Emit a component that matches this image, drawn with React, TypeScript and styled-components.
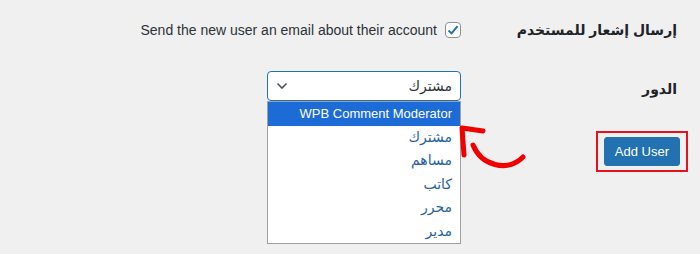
import React from "react";
import styled, { createGlobalStyle } from "styled-components";

const GlobalStyle = createGlobalStyle`
  body {
    margin: 0;
    background: #f0f0f1;
    font-family: "Liberation Sans", "DejaVu Sans", Arial, sans-serif;
    color: #2c3338;
  }
`;

const Page = styled.div`
  direction: rtl;
  width: 700px;
  height: 254px;
  padding-top: 14px;
  box-sizing: border-box;
  overflow: hidden;
`;

const FormTable = styled.div`
  padding-right: 23px;
`;

const Row = styled.div<{ $top?: number; $align?: string }>`
  display: flex;
  align-items: ${(p) => p.$align || "center"};
  margin-top: ${(p) => p.$top || 0}px;
  min-height: 32px;
`;

const Label = styled.div<{ $pad?: number }>`
  width: 216px;
  flex: none;
  font-weight: bold;
  font-size: 14px;
  line-height: 20px;
  color: #1d2327;
  padding-top: ${(p) => p.$pad || 0}px;
`;

const CheckLabel = styled.label`
  display: flex;
  align-items: center;
  gap: 8px;
  font-size: 14px;
  color: #2c3338;
`;

const Checkbox = styled.span`
  width: 16px;
  height: 16px;
  box-sizing: border-box;
  border: 1px solid #8c8f94;
  border-radius: 4px;
  background: #fff;
  display: flex;
  align-items: center;
  justify-content: center;
`;

const SelectWrap = styled.div`
  position: relative;
  width: 194px;
`;

const Select = styled.div`
  height: 30px;
  box-sizing: border-box;
  border: 1px solid #2271b1;
  border-radius: 4px;
  background: #fff;
  display: flex;
  align-items: center;
  justify-content: space-between;
  padding: 0 8px 0 8px;
  font-size: 14px;
  color: #2c3338;
`;

const Menu = styled.ul`
  position: absolute;
  top: 30px;
  left: 0;
  right: 0;
  margin: 0;
  padding: 0;
  list-style: none;
  background: #fff;
  border: 1px solid #a0a0a0;
  z-index: 2;
`;

const Option = styled.li<{ $active?: boolean }>`
  height: 23.5px;
  line-height: 23.5px;
  padding: 0 8px;
  font-size: ${(p) => (p.$active ? 13 : 14)}px;
  text-align: right;
  background: ${(p) => (p.$active ? "#1c6bd6" : "transparent")};
  color: ${(p) => (p.$active ? "#fff" : "#27629e")};
`;

const Pointer = styled.svg`
  position: absolute;
  left: 192px;
  top: 52px;
  z-index: 3;
`;

const Submit = styled.div`
  direction: rtl;
  display: flex;
  padding-right: 12px;
  margin-top: 28px;
`;

const Highlight = styled.div`
  border: 2px solid #e3141e;
  padding: 4px 6px;
`;

const Button = styled.button`
  height: 29px;
  padding: 0 10px;
  background: #2271b1;
  border: 1px solid #2271b1;
  border-radius: 3px;
  color: #fff;
  font-family: inherit;
  font-size: 13px;
  cursor: pointer;
`;

const roles = ["مشترك", "مساهم", "كاتب", "محرر", "مدير"];

export default function App() {
  return (
    <Page>
      <GlobalStyle />
      <FormTable>
        <Row>
          <Label>إرسال إشعار للمستخدم</Label>
          <CheckLabel>
            <Checkbox>
              <svg width="12" height="12" viewBox="0 0 12 12">
                <path d="M1.5 6.5 L4.6 9.4 L10.5 2.2" fill="none" stroke="#2271b1" strokeWidth="2" />
              </svg>
            </Checkbox>
            <span dir="ltr">Send the new user an email about their account</span>
          </CheckLabel>
        </Row>
        <Row $top={25} $align="flex-start">
          <Label $pad={8}>الدور</Label>
          <SelectWrap>
            <Select>
              <span>مشترك</span>
              <svg width="12" height="8" viewBox="0 0 12 8">
                <path d="M1.5 1.5 L6 6 L10.5 1.5" fill="none" stroke="#50575e" strokeWidth="1.6" />
              </svg>
            </Select>
            <Menu>
              <Option $active dir="ltr">
                WPB Comment Moderator
              </Option>
              {roles.map((r) => (
                <Option key={r}>{r}</Option>
              ))}
            </Menu>
            <Pointer width="70" height="50" viewBox="0 0 70 50">
              <path d="M5 32 L3 5 L24 8" fill="none" stroke="#f00000" strokeWidth="5" strokeLinecap="round" strokeLinejoin="round" />
              <path d="M14 22 C22 42 48 50 64 34" fill="none" stroke="#f00000" strokeWidth="5" strokeLinecap="round" />
            </Pointer>
          </SelectWrap>
        </Row>
      </FormTable>
      <Submit>
        <Highlight>
          <Button>Add User</Button>
        </Highlight>
      </Submit>
    </Page>
  );
}
